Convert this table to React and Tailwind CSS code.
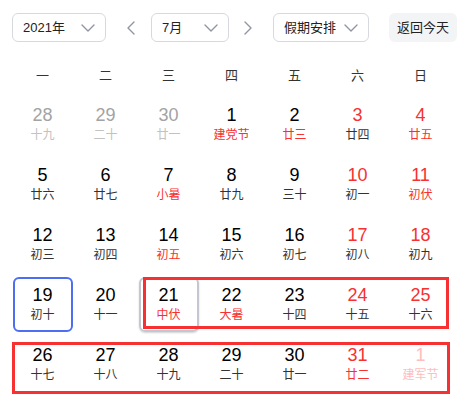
import React from 'react'

const weekdays = ['一', '二', '三', '四', '五', '六', '日'];

// n: number, l: lunar, t: type ('prev' | 'next' | 'rest' | ''), lr: lunar red
const days = [
  { n: 28, l: '十九', t: 'prev' },
  { n: 29, l: '二十', t: 'prev' },
  { n: 30, l: '廿一', t: 'prev' },
  { n: 1, l: '建党节', lr: true },
  { n: 2, l: '廿三', lr: true },
  { n: 3, l: '廿四', t: 'rest' },
  { n: 4, l: '廿五', t: 'rest', lr: true },

  { n: 5, l: '廿六' },
  { n: 6, l: '廿七' },
  { n: 7, l: '小暑', lr: true },
  { n: 8, l: '廿九' },
  { n: 9, l: '三十' },
  { n: 10, l: '初一', t: 'rest' },
  { n: 11, l: '初伏', t: 'rest', lr: true },

  { n: 12, l: '初三' },
  { n: 13, l: '初四' },
  { n: 14, l: '初五', lr: true },
  { n: 15, l: '初六' },
  { n: 16, l: '初七' },
  { n: 17, l: '初八', t: 'rest' },
  { n: 18, l: '初九', t: 'rest' },

  { n: 19, l: '初十', selected: true },
  { n: 20, l: '十一' },
  { n: 21, l: '中伏', lr: true, hover: true },
  { n: 22, l: '大暑', lr: true },
  { n: 23, l: '十四' },
  { n: 24, l: '十五', t: 'rest' },
  { n: 25, l: '十六', t: 'rest' },

  { n: 26, l: '十七' },
  { n: 27, l: '十八' },
  { n: 28, l: '十九' },
  { n: 29, l: '二十' },
  { n: 30, l: '廿一' },
  { n: 31, l: '廿二', t: 'rest', lr: true },
  { n: 1, l: '建军节', t: 'next' },
];

const ChevronDown = () => (
  <svg width="14" height="8" viewBox="0 0 14 8" fill="none">
    <path d="M1 1l6 6 6-6" stroke="#9195a3" strokeWidth="1.4" strokeLinecap="round" strokeLinejoin="round" />
  </svg>
);

const Arrow = ({ dir }) => (
  <svg width="8" height="14" viewBox="0 0 8 14" fill="none">
    <path
      d={dir === 'left' ? 'M7 1L1 7l6 6' : 'M1 1l6 6-6 6'}
      stroke="#9195a3"
      strokeWidth="1.4"
      strokeLinecap="round"
      strokeLinejoin="round"
    />
  </svg>
);

const Select = ({ label, className }) => (
  <div className={`h-[29px] flex items-center justify-between pl-[10px] pr-[10px] border border-[#d7d9e0] rounded-md bg-white text-[13px] text-[#222] ${className}`}>
    <span>{label}</span>
    <ChevronDown />
  </div>
);

const DayCell = ({ d }) => {
  let numColor = 'text-black';
  if (d.t === 'prev') numColor = 'text-[#a3a3a3]';
  else if (d.t === 'next') numColor = 'text-[#ffbdbd]';
  else if (d.t === 'rest') numColor = 'text-[#f73131]';

  let lunarColor = 'text-[#333]';
  if (d.t === 'prev') lunarColor = 'text-[#c2c2c2]';
  else if (d.t === 'next') lunarColor = 'text-[#ffbdbd]';
  else if (d.lr) lunarColor = 'text-[#f73131]';

  let box = 'border-2 border-transparent';
  if (d.selected) box = 'border-2 border-[#4e6ef2]';
  if (d.hover) box = 'border-2 border-[#c4c7cf] shadow-[0_1px_2px_rgba(0,0,0,0.18)]';

  return (
    <div className="flex justify-center">
      <div className={`w-[60px] h-[55px] rounded-md flex flex-col items-center pt-[5px] ${box}`}>
        <span className={`text-[18px] leading-[22px] ${numColor}`}>{d.n}</span>
        <span className={`text-[12px] leading-[16px] mt-[1px] ${lunarColor}`}>{d.l}</span>
      </div>
    </div>
  );
};

const App = () => {
  return (
    <div
      className="relative w-[463px] h-[396px] bg-white overflow-hidden"
      style={{ fontFamily: '"Liberation Sans", "Noto Sans CJK SC", sans-serif' }}
    >
      {/* Top controls */}
      <div className="flex items-center pt-[13px] h-[42px]">
        <Select label="2021年" className="ml-[12px] w-[94px]" />
        <div className="ml-[20px] w-[10px] flex justify-center">
          <Arrow dir="left" />
        </div>
        <Select label="7月" className="ml-[15px] w-[78px]" />
        <div className="ml-[14px] w-[10px] flex justify-center">
          <Arrow dir="right" />
        </div>
        <Select label="假期安排" className="ml-[20px] w-[96px]" />
        <div className="ml-[20px] w-[68px] h-[29px] flex items-center justify-center rounded-md bg-[#f3f4f6] text-[13px] text-[#222]">
          返回今天
        </div>
      </div>

      {/* Weekday header */}
      <div className="grid grid-cols-7 px-[11px] mt-[18px] h-[32px] items-center">
        {weekdays.map((w) => (
          <div key={w} className="text-center text-[13px] text-[#333]">{w}</div>
        ))}
      </div>

      {/* Days */}
      <div className="grid grid-cols-7 px-[11px] mt-[5px] gap-y-[5px]">
        {days.map((d, i) => (
          <DayCell key={i} d={d} />
        ))}
      </div>

      {/* Highlight annotations */}
      <div className="absolute left-[143px] top-[277px] w-[306px] h-[52px] border-[3px] border-[#f73131] pointer-events-none" />
      <div className="absolute left-[12px] top-[342px] w-[438px] h-[52px] border-[3px] border-[#f73131] pointer-events-none" />
    </div>
  );
};

export default App;
